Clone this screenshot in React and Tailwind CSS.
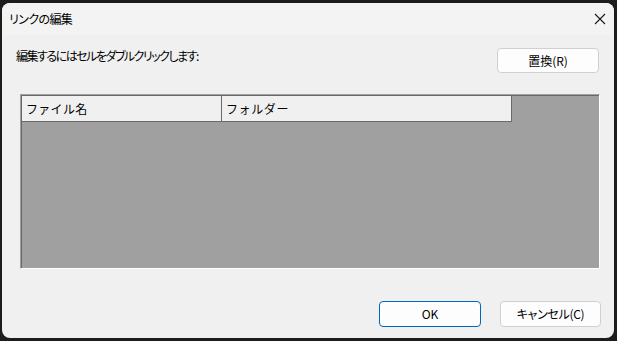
import React from "react";

const font = {
  fontFamily: '"Noto Sans CJK JP", "Noto Sans", sans-serif',
};

export default function App() {
  return (
    <div
      className="w-[617px] h-[341px] bg-[#1c1c1c] pt-[3px] pl-[2px] pr-[3px] pb-[3px] text-[12px] text-[#000]"
      style={font}
    >
      <div className="h-full rounded-lg bg-[#f0f0f0] flex flex-col overflow-hidden">
        {/* title bar */}
        <div className="h-[32px] flex items-center justify-between pl-[7px] pr-[7px] bg-[#f3f3f3]">
          <span className="text-[12px] leading-none [font-feature-settings:'palt'] tracking-[-0.6px]">
            リンクの編集
          </span>
          <svg width="12" height="12" viewBox="0 0 12 12" className="mr-[1px]">
            <path d="M1 1L11 11M11 1L1 11" stroke="#1a1a1a" strokeWidth="1.1" />
          </svg>
        </div>

        <div className="flex-1 flex flex-col pl-[18px] pr-[14px]">
          <div className="flex items-start justify-between mt-[13px] pr-[1px]">
            <span className="-ml-[4px] mt-[1px] leading-[14px] [font-feature-settings:'palt'] tracking-[-1.5px]">
              編集するにはセルをダブルクリックします:
            </span>
            <button className="w-[102px] h-[25px] rounded-[4px] border border-[#d0d0d0] bg-[#fdfdfd] text-[12px] leading-none [font-feature-settings:'palt']">
              置換(R)
            </button>
          </div>

          <div className="mt-[21px] h-[175px] border-t border-l border-t-[#a0a0a0] border-l-[#a0a0a0] border-r border-b border-r-white border-b-white">
            <div className="h-full border-t border-l border-[#696969] bg-[#a0a0a0]">
              <div className="flex h-[26px] w-[490px]">
                <div className="w-[200px] bg-[#f0f0f0] border-r border-b border-[#696969] flex items-center pl-[4px] tracking-[0.3px]">
                  ファイル名
                </div>
                <div className="flex-1 bg-[#f0f0f0] border-r border-b border-[#696969] flex items-center pl-[4px] tracking-[0.6px]">
                  フォルダー
                </div>
              </div>
            </div>
          </div>

          <div className="flex justify-end gap-[19px] mt-[32px] -mr-[1px]">
            <button className="w-[102px] h-[26px] rounded-[4px] border border-[#0067c0] bg-[#fdfdfd] text-[12px] leading-none">
              OK
            </button>
            <button className="w-[101px] h-[26px] rounded-[4px] border border-[#d0d0d0] bg-[#fdfdfd] text-[12px] leading-none [font-feature-settings:'palt'] tracking-[-0.3px]">
              キャンセル(C)
            </button>
          </div>
        </div>
      </div>
    </div>
  );
}
